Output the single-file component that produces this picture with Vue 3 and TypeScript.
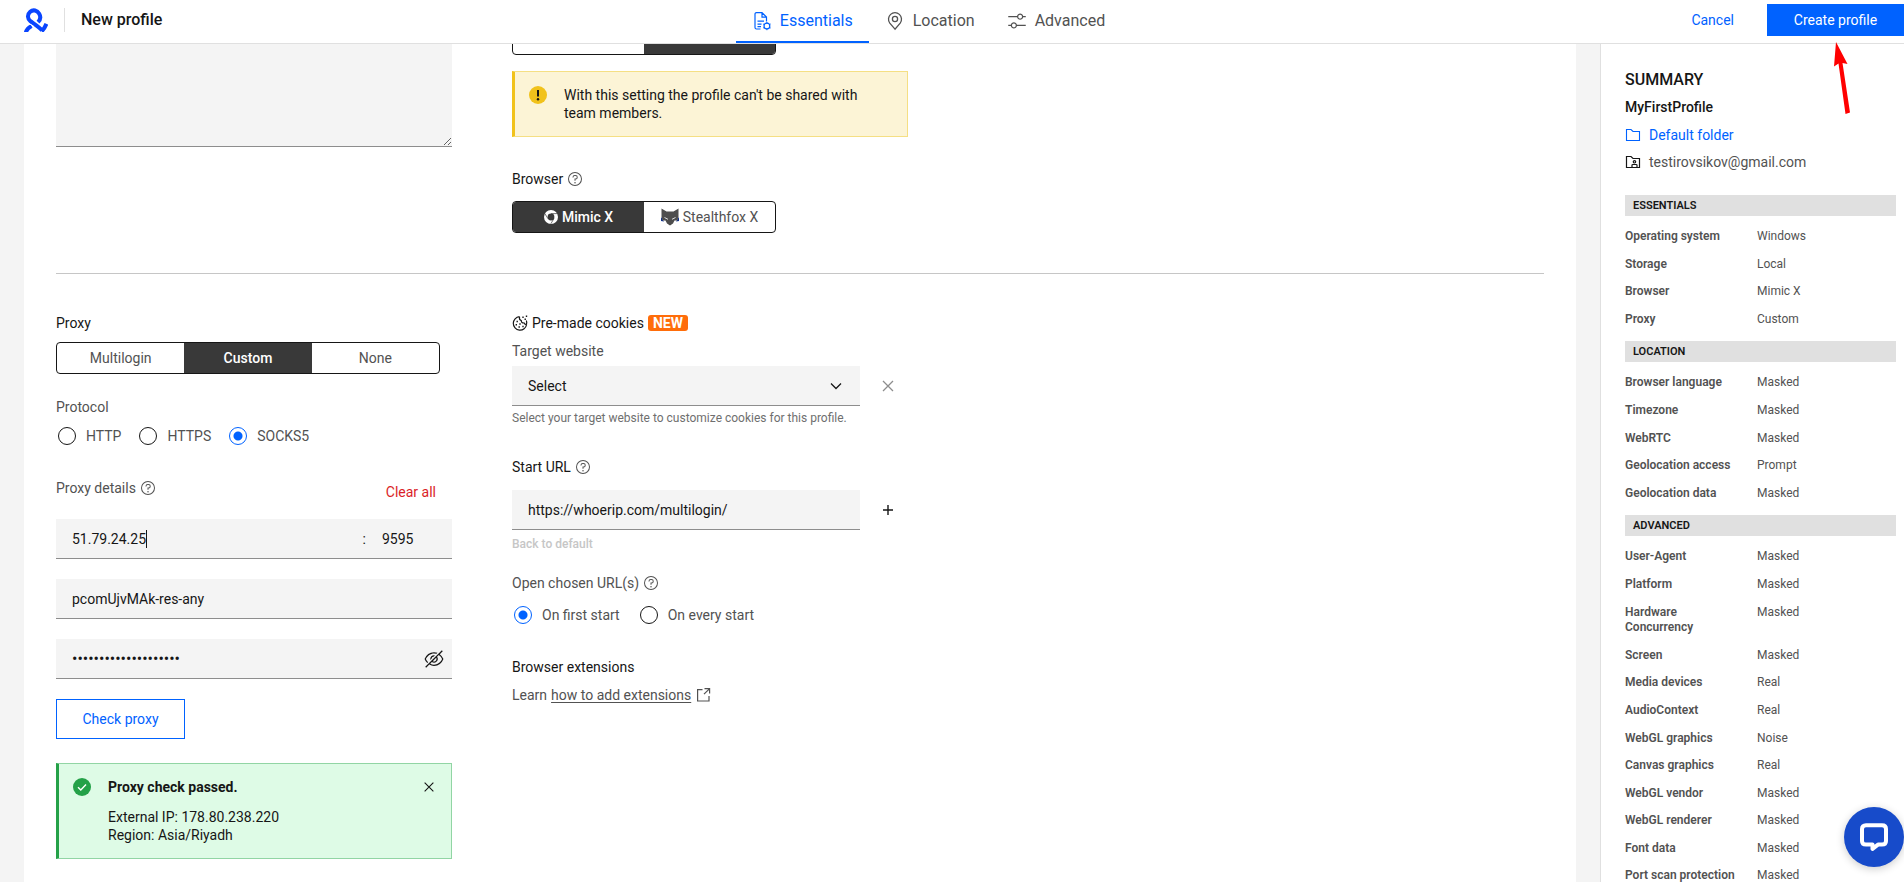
<script setup lang="ts">
import { ref } from 'vue'

interface SummarySection {
  title: string
  rows: [string, string][]
}

const storage = ref('local')
const browser = ref('mimic')
const proxyType = ref('custom')
const protocol = ref('SOCKS5')
const openOn = ref('first')
const host = ref('51.79.24.25')
const port = ref('9595')
const login = ref('pcomUjvMAk-res-any')
const password = ref('k2Vd9sQx71LmPz0TrWe4')
const startUrl = ref('https://whoerip.com/multilogin/')
const site = ref('')
const notes = ref('')

const proxyTypes = [
  { id: 'multilogin', label: 'Multilogin' },
  { id: 'custom', label: 'Custom' },
  { id: 'none', label: 'None' },
]
const protocols = ['HTTP', 'HTTPS', 'SOCKS5']

const sections: SummarySection[] = [
  {
    title: 'ESSENTIALS',
    rows: [
      ['Operating system', 'Windows'],
      ['Storage', 'Local'],
      ['Browser', 'Mimic X'],
      ['Proxy', 'Custom'],
    ],
  },
  {
    title: 'LOCATION',
    rows: [
      ['Browser language', 'Masked'],
      ['Timezone', 'Masked'],
      ['WebRTC', 'Masked'],
      ['Geolocation access', 'Prompt'],
      ['Geolocation data', 'Masked'],
    ],
  },
  {
    title: 'ADVANCED',
    rows: [
      ['User-Agent', 'Masked'],
      ['Platform', 'Masked'],
      ['Hardware Concurrency', 'Masked'],
      ['Screen', 'Masked'],
      ['Media devices', 'Real'],
      ['AudioContext', 'Real'],
      ['WebGL graphics', 'Noise'],
      ['Canvas graphics', 'Real'],
      ['WebGL vendor', 'Masked'],
      ['WebGL renderer', 'Masked'],
      ['Font data', 'Masked'],
      ['Port scan protection', 'Masked'],
    ],
  },
]
</script>

<template>
  <div class="page">
    <svg class="defs" aria-hidden="true">
      <symbol id="help" viewBox="0 0 32 32">
        <path d="M16 2a14 14 0 1 0 14 14A14 14 0 0 0 16 2Zm0 26a12 12 0 1 1 12-12 12 12 0 0 1-12 12Z" />
        <circle cx="16" cy="23.5" r="1.5" />
        <path d="M17 8h-1.5A4.49 4.49 0 0 0 11 12.5v.5h2v-.5a2.5 2.5 0 0 1 2.5-2.5H17a2.5 2.5 0 0 1 0 5h-2v4.5h2V17a4.5 4.5 0 0 0 0-9Z" />
      </symbol>
      <symbol id="cross" viewBox="0 0 16 16">
        <path d="M3 3l10 10M13 3L3 13" fill="none" stroke="currentColor" stroke-width="1.3" />
      </symbol>
    </svg>

    <header class="topbar">
      <div class="brand">
        <svg class="logo" viewBox="0 0 24 24" aria-hidden="true">
          <g fill="none" stroke="#0a45ff" stroke-width="4">
            <path d="M14 14.2C16.6 11.6 16.6 8.2 15.2 5.8C13.2 2.4 9.2 1.2 6.2 3.8C3 6.6 3.4 10.6 6.4 13.2C9.5 15.6 14.5 18.4 18 22.4" />
            <path d="M17.6 23.4C19.2 21.8 20.8 19.8 22.4 15.8" />
            <path d="M1.8 25C2.2 22.2 4.4 19.6 7.6 18" />
          </g>
          <path d="M4.6 15.4L10 18.6" stroke="#fff" stroke-width="1" />
        </svg>
        <h1 class="title">New profile</h1>
      </div>
      <nav class="tabs" role="tablist">
        <button class="tab active" role="tab" aria-selected="true">
          <svg class="tab-icon" viewBox="0 0 20 20" fill="none" stroke="currentColor" stroke-width="1.2">
            <path d="M8.5 18H4.5a1.5 1.5 0 0 1-1.5-1.5V3a1.4 1.4 0 0 1 1.5-1.4H10L14.5 6v4.5M10 1.6V6.2H14.5M5.5 10.2H12M5.5 13.2H9.5M5.5 15.6H9" />
            <circle cx="14.9" cy="15" r="2.9" />
            <path d="M14.9 11v1.4M14.9 17.8v1.4M11.2 13l1.2.6M17.4 16.4l1.2.6M11.2 17l1.2-.6M17.4 13.6l1.2-.6" stroke-width="1" />
          </svg>
          <span>Essentials</span>
        </button>
        <button class="tab" role="tab" aria-selected="false">
          <svg class="tab-icon" viewBox="0 0 20 20" fill="none" stroke="currentColor" stroke-width="1.3">
            <path d="M10 18.2L4.8 12.1A6.5 6.5 0 1 1 15.2 12.1Z" />
            <circle cx="10" cy="8" r="2.6" />
          </svg>
          <span>Location</span>
        </button>
        <button class="tab" role="tab" aria-selected="false">
          <svg class="tab-icon" viewBox="0 0 32 32" fill="currentColor">
            <path d="M30 8h-4.100c-.5-2.300-2.500-4-4.900-4s-4.400 1.700-4.900 4H2v2h14.100c.5 2.300 2.500 4 4.900 4s4.400-1.700 4.900-4H30V8zM21 12c-1.700 0-3-1.300-3-3s1.300-3 3-3s3 1.300 3 3S22.700 12 21 12zM2 24h4.100c.5 2.300 2.500 4 4.900 4s4.400-1.700 4.900-4H30v-2H15.900c-.5-2.300-2.500-4-4.900-4s-4.400 1.700-4.900 4H2V24zM11 20c1.700 0 3 1.300 3 3s-1.300 3-3 3s-3-1.300-3-3S9.300 20 11 20z" />
          </svg>
          <span>Advanced</span>
        </button>
      </nav>
      <div class="actions">
        <button class="cancel">Cancel</button>
        <button class="create">Create profile</button>
      </div>
    </header>

    <div class="body">
      <main class="card">
        <section class="columns upper">
          <div>
            <textarea v-model="notes" class="notes" aria-label="Notes"></textarea>
          </div>
          <div>
            <div class="storage-clip">
              <div class="segmented two">
                <button class="seg" :class="{ on: storage === 'cloud' }" aria-label="Cloud storage" @click="storage = 'cloud'">
                  <svg class="cut-icon" viewBox="0 0 20 18"><path d="M5 12.500h8.500a4 4 0 0 0 .5-7.900A5 5 0 0 0 4.500 5 3.800 3.800 0 0 0 5 12.500Z" fill="none" stroke="currentColor" stroke-width="1.500" /></svg>
                </button>
                <button class="seg" :class="{ on: storage === 'local' }" aria-label="Local storage" @click="storage = 'local'">
                  <svg class="cut-icon" viewBox="0 0 20 18"><path d="M3 2h14v9H3z" fill="none" stroke="currentColor" /><path d="M2 12h16v2H2z" fill="#a8a8a8" /></svg>
                </button>
              </div>
            </div>
            <div class="notice warn" role="status">
              <svg class="notice-icon" viewBox="0 0 18 18">
                <circle cx="9" cy="9" r="9" fill="#f1c21b" />
                <path d="M8 4h2v6.500H8z" fill="#161616" />
                <circle cx="9" cy="13.300" r="1.200" fill="#161616" />
              </svg>
              <p class="notice-body">With this setting the profile can't be shared with team members.</p>
            </div>
            <h2 class="label strong browser-label">Browser <svg class="help"><use href="#help" /></svg></h2>
            <div class="segmented two">
              <button class="seg" :class="{ on: browser === 'mimic' }" @click="browser = 'mimic'">
                <svg class="mimic" viewBox="0 0 14 14">
                  <circle cx="7" cy="7" r="7" fill="#fff" />
                  <circle cx="7" cy="7" r="3.400" fill="#393939" />
                  <path d="M7 3.600H13.500M4 8.700L.8 3.500M9.900 8.700L6.800 13.800" stroke="#393939" stroke-width=".7" />
                </svg>
                <span>Mimic X</span>
              </button>
              <button class="seg" :class="{ on: browser === 'stealthfox' }" @click="browser = 'stealthfox'">
                <svg class="fox" viewBox="0 0 18 18">
                  <path d="M0 9L3 13.500 0 13ZM18 9L15 13.500 18 13Z" fill="#0c2f8f" />
                  <path d="M.5.500L5.500 3.500H12.500L17.500.500V9L16.500 12.500H13.500L12 15.500 9 17.500 6 15.500 4.500 12.500H1.500L.5 9Z" fill="#4d4d4d" />
                  <path d="M3.500 9.500L7 11.300M14.500 9.500L11 11.300" stroke="#e0e0e0" />
                </svg>
                <span>Stealthfox X</span>
              </button>
            </div>
          </div>
        </section>

        <hr class="divider" />

        <section class="columns lower">
          <div>
            <h2 class="label strong">Proxy</h2>
            <div class="segmented three">
              <button v-for="t in proxyTypes" :key="t.id" class="seg" :class="{ on: proxyType === t.id }" @click="proxyType = t.id">
                {{ t.label }}
              </button>
            </div>

            <fieldset class="radios protocol">
              <legend class="label">Protocol</legend>
              <label v-for="p in protocols" :key="p" class="radio">
                <input v-model="protocol" type="radio" name="protocol" :value="p" />
                <span>{{ p }}</span>
              </label>
            </fieldset>

            <div class="details-head">
              <h2 class="label">Proxy details <svg class="help"><use href="#help" /></svg></h2>
              <button class="clear">Clear all</button>
            </div>
            <div class="proxy-fields">
              <div class="field host">
                <input v-model="host" class="host-input" aria-label="Host" />
                <span class="caret"></span>
                <span class="colon">:</span>
                <input v-model="port" class="port-input" aria-label="Port" />
              </div>
              <div class="field"><input v-model="login" aria-label="Login" /></div>
              <div class="field">
                <input v-model="password" class="password" type="password" aria-label="Password" />
                <button class="eye" aria-label="Show password">
                  <svg viewBox="0 0 32 32" fill="currentColor">
                    <path d="M5.240 22.510l1.430-1.420A14.060 14.060 0 0 1 3.070 16C5.100 10.930 10.700 7 16 7a12.380 12.380 0 0 1 4 .720l1.550-1.560A14.720 14.720 0 0 0 16 5 16.690 16.690 0 0 0 1.060 15.660a1 1 0 0 0 0 .680A16 16 0 0 0 5.240 22.510Z" />
                    <path d="M12 15.730a4 4 0 0 1 3.700-3.700l1.810-1.820a6 6 0 0 0-7.330 7.330Z" />
                    <path d="M30.940 15.660A16.400 16.400 0 0 0 25.200 8.220L30 3.410 28.590 2 2 28.590 3.410 30l5.100-5.100A15.290 15.290 0 0 0 16 27 16.690 16.690 0 0 0 30.940 16.340 1 1 0 0 0 30.940 15.660ZM20 16a4 4 0 0 1-6 3.440L19.440 14A4 4 0 0 1 20 16Zm-4 9a13.050 13.050 0 0 1-6-1.580l2.540-2.540a6 6 0 0 0 8.350-8.350l2.870-2.870A14.540 14.540 0 0 1 28.930 16C26.900 21.070 21.300 25 16 25Z" />
                  </svg>
                </button>
              </div>
              <button class="check">Check proxy</button>
            </div>

            <div class="notice success" role="status">
              <svg class="notice-icon" viewBox="0 0 18 18">
                <circle cx="9" cy="9" r="9" fill="#24a148" />
                <path d="M5 9.200L7.800 12 13 6.600" fill="none" stroke="#fff" stroke-width="1.400" />
              </svg>
              <div class="notice-body">
                <strong>Proxy check passed.</strong>
                <p>External IP: 178.80.238.220<br />Region: Asia/Riyadh</p>
              </div>
              <button class="icon-button" aria-label="Dismiss"><svg class="x-small"><use href="#cross" /></svg></button>
            </div>
          </div>

          <div>
            <h2 class="label strong">
              <svg class="cookie" viewBox="0 0 16 16" fill="none" stroke="currentColor" stroke-width="1.200">
                <path d="M7.500 1.700A6.700 6.700 0 1 0 14.600 9.500M14.500 9C14.900 7.800 14.800 6.500 14.300 5.500M7.500 1.700C7.200 3.500 7.800 5.300 9.300 5.700 9.200 7.300 10.500 8.300 12 7.900 12.500 9.200 13.500 9.700 14.600 9.300" />
                <path d="M4.500 6.500h1.400M3.600 9.800h1.400M6.500 12h1.400M7.300 8.900h1.400M10.300 11.600h1.400M10.300 2.300h1.400M13.800 1.200h1.400M12.500 4.300h1.400" stroke-width="1.500" />
              </svg>
              Pre-made cookies <span class="badge">NEW</span>
            </h2>
            <label class="label target-label" for="site">Target website</label>
            <div class="with-action">
              <div class="field select">
                <select id="site" v-model="site"><option value="">Select</option></select>
                <svg class="chevron" viewBox="0 0 16 16"><path d="M3 5.500L8 10.500 13 5.500" fill="none" stroke="currentColor" stroke-width="1.300" /></svg>
              </div>
              <button class="icon-button muted" aria-label="Clear target website"><svg><use href="#cross" /></svg></button>
            </div>
            <p class="helper">Select your target website to customize cookies for this profile.</p>

            <label class="label strong url-label" for="url">Start URL <svg class="help"><use href="#help" /></svg></label>
            <div class="with-action">
              <div class="field"><input id="url" v-model="startUrl" /></div>
              <button class="icon-button" aria-label="Add URL">
                <svg viewBox="0 0 16 16"><path d="M8 3v10M3 8h10" stroke="currentColor" stroke-width="1.400" /></svg>
              </button>
            </div>
            <button class="back" disabled>Back to default</button>

            <fieldset class="radios open-on">
              <legend class="label">Open chosen URL(s) <svg class="help"><use href="#help" /></svg></legend>
              <label class="radio"><input v-model="openOn" type="radio" name="open" value="first" /><span>On first start</span></label>
              <label class="radio"><input v-model="openOn" type="radio" name="open" value="every" /><span>On every start</span></label>
            </fieldset>

            <h2 class="label strong ext-label">Browser extensions</h2>
            <p class="label learn">
              Learn <a href="#extensions">how to add extensions</a>
              <svg class="launch" viewBox="0 0 16 16" fill="none" stroke="currentColor" stroke-width="1.200">
                <path d="M7.500 2.600H2.600V14H14V9M9.500 1.600H14.600V6.500M14.400 1.800L9 7.200" />
              </svg>
            </p>
          </div>
        </section>
      </main>

      <aside class="summary">
        <h2 class="summary-title">SUMMARY</h2>
        <p class="profile-name">MyFirstProfile</p>
        <a class="meta folder" href="#folder">
          <svg viewBox="0 0 16 14" fill="none" stroke="currentColor" stroke-width="1.100"><path d="M1.500 1.500H6L8 3.500H14.500V12.500H1.500Z" /></svg>
          <span>Default folder</span>
        </a>
        <p class="meta">
          <svg class="dark" viewBox="0 0 16 14" fill="none" stroke="currentColor" stroke-width="1.200">
            <path d="M1.500 1.500H6L8 3.500H14.500V12.500H1.500Z" />
            <circle cx="9.500" cy="6.800" r="1.200" />
            <path d="M7 12V10.200Q7 9.500 7.800 9.500H11.200Q12 9.500 12 10.200V12" />
          </svg>
          <span>testirovsikov@gmail.com</span>
        </p>
        <section v-for="s in sections" :key="s.title" class="group">
          <h3>{{ s.title }}</h3>
          <dl>
            <div v-for="[name, value] in s.rows" :key="name" class="row">
              <dt>{{ name }}</dt>
              <dd>{{ value }}</dd>
            </div>
          </dl>
        </section>
      </aside>
    </div>

    <svg class="pointer" viewBox="0 0 18 73" aria-hidden="true">
      <path d="M3 0L14.500 22 9.500 21 17 70.500 12.500 72 5.500 21.500 1 24.500Z" fill="#f00" />
    </svg>

    <button class="chat" aria-label="Open chat">
      <svg viewBox="0 0 28 28">
        <path d="M6 2.200H22Q26 2.200 26 6V18Q26 21.600 22 21.600H18L12.500 25.800V21.600H6Q2 21.600 2 18V6Q2 2.200 6 2.200Z" fill="none" stroke="#fff" stroke-width="4" stroke-linejoin="round" />
      </svg>
    </button>
  </div>
</template>

<style>
html,
body {
  margin: 0;
  overflow: hidden;
}
</style>

<style scoped>
.page {
  height: 100vh;
  display: flex;
  flex-direction: column;
  overflow: hidden;
  background: #f4f4f4;
  color: #161616;
  font-family: Roboto, "Liberation Sans", sans-serif;
  font-size: 14px;
  line-height: 18px;
}
.defs {
  display: none;
}
h1, h2, h3, p, dl, dd {
  margin: 0;
  font-size: inherit;
  font-weight: 400;
}
button, input, select, textarea {
  font: inherit;
  color: inherit;
  margin: 0;
  padding: 0;
  border: 0;
  border-radius: 0;
  background: none;
  outline: 0;
}
button {
  cursor: pointer;
}
svg {
  flex: none;
}

.topbar {
  flex: none;
  display: grid;
  grid-template-columns: minmax(0, 736fr) auto minmax(0, 783fr);
  height: 43px;
  border-bottom: 1px solid #e0e0e0;
  background: #fff;
}
.brand {
  display: flex;
  align-items: center;
  height: 40px;
  padding-left: 24px;
}
.logo {
  width: 24px;
  height: 24px;
}
.title {
  margin-left: 16px;
  padding-left: 16px;
  border-left: 1px solid #e0e0e0;
  font-size: 16px;
  font-weight: 500;
  line-height: 24px;
}
.tabs {
  display: flex;
}
.tab {
  display: flex;
  align-items: center;
  gap: 8px;
  padding: 0 16px 2px;
  color: #525252;
  font-size: 16px;
}
.tab.active {
  padding-bottom: 0;
  border-bottom: 2px solid #0062ff;
  color: #0062ff;
}
.tab-icon {
  width: 20px;
  height: 20px;
}
.actions {
  display: flex;
  justify-content: flex-end;
  align-items: center;
  height: 40px;
  gap: 33px;
}
.cancel {
  color: #0062ff;
}
.create {
  min-width: 137px;
  height: 32px;
  padding: 0 24px;
  background: #0062ff;
  color: #fff;
}

.body {
  flex: 1;
  min-height: 0;
  display: flex;
}
.card {
  flex: 1;
  min-width: 0;
  margin: 0 24px;
  padding: 0 32px;
  background: #fff;
}
.columns {
  display: grid;
  grid-template-columns: repeat(2, minmax(0, 396px));
  column-gap: 60px;
}
.upper {
  padding-bottom: 40px;
}
.notes {
  display: block;
  box-sizing: border-box;
  width: 100%;
  height: 103px;
  background: #f4f4f4;
  border-bottom: 1px solid #8d8d8d;
  resize: vertical;
}
.storage-clip {
  height: 11px;
  margin-bottom: 16px;
  overflow: hidden;
  display: flex;
  align-items: flex-end;
}
.segmented {
  flex: none;
  display: flex;
  box-sizing: border-box;
  height: 32px;
  border: 1px solid #161616;
  border-radius: 4px;
  overflow: hidden;
}
.two {
  width: 264px;
}
.three {
  width: 384px;
}
.seg {
  flex: 1;
  display: flex;
  align-items: center;
  justify-content: center;
  gap: 4px;
  color: #525252;
}
.seg.on {
  background: #393939;
  color: #fff;
  font-weight: 500;
}
.cut-icon {
  width: 20px;
  height: 18px;
  margin-right: 40px;
}
.mimic {
  width: 14px;
  height: 14px;
}
.fox {
  width: 18px;
  height: 18px;
}

.notice {
  display: flex;
  align-items: flex-start;
  gap: 17px;
  padding: 14px;
  border: 1px solid;
  border-left-width: 3px;
}
.warn {
  padding-right: 24px;
  border-color: #f5df84;
  border-left-color: #f1c21b;
  background: #fcf4d6;
}
.success {
  margin-top: 24px;
  border-color: #91d5a4;
  border-left-color: #24a148;
  background: #defbe6;
}
.notice-icon {
  width: 18px;
  height: 18px;
}
.notice-body {
  flex: 1;
}
.notice-body strong {
  display: block;
  margin-bottom: 12px;
  font-weight: 700;
}

.label {
  display: flex;
  align-items: center;
  gap: 4px;
  padding: 0;
  color: #525252;
}
.strong {
  color: #161616;
}
.help {
  width: 16px;
  height: 16px;
  fill: #525252;
}
.browser-label {
  margin: 33px 0 13px;
}
.divider {
  margin: 0;
  border: 0;
  border-top: 1px solid #c6c6c6;
}
.lower {
  padding-top: 40px;
}
.lower .three {
  margin-top: 10px;
}
.radios {
  display: flex;
  gap: 18px;
  min-width: 0;
  margin: 0;
  padding: 0 2px;
  border: 0;
}
.radios legend {
  margin-left: -2px;
}
.radio {
  display: flex;
  align-items: center;
  gap: 10px;
  color: #525252;
}
.radio input {
  appearance: none;
  width: 18px;
  height: 18px;
  border: 1px solid #161616;
  border-radius: 50%;
}
.radio input:checked {
  border-color: #0062ff;
  background: radial-gradient(circle, #0062ff 4px, transparent 5px);
}
.protocol {
  margin-top: 24px;
}
.protocol legend {
  margin-bottom: 11px;
}
.details-head {
  display: flex;
  justify-content: space-between;
  align-items: flex-end;
  height: 26px;
  margin-top: 30px;
  padding-right: 16px;
}
.details-head h2 {
  align-self: center;
}
.clear {
  color: #da1e28;
}
.proxy-fields {
  display: flex;
  flex-direction: column;
  align-items: stretch;
  gap: 20px;
  margin-top: 18px;
}
.field {
  flex: 1;
  display: flex;
  align-items: center;
  box-sizing: border-box;
  height: 40px;
  min-width: 0;
  padding: 0 8px 0 16px;
  border-bottom: 1px solid #8d8d8d;
  background: #f4f4f4;
}
.proxy-fields .field {
  flex: none;
}
.field input,
.field select {
  flex: 1;
  min-width: 0;
}
.field .host-input {
  flex: none;
  field-sizing: content;
}
.field .password {
  font-size: 16px;
}
.caret {
  width: 1px;
  height: 18px;
  background: #161616;
}
.colon {
  margin-left: auto;
}
.field .port-input {
  flex: none;
  width: 62px;
  margin-left: 16px;
}
.eye {
  width: 20px;
  height: 20px;
}
.eye svg {
  display: block;
}
.check {
  align-self: flex-start;
  min-width: 129px;
  height: 40px;
  padding: 0 24px;
  border: 1px solid #0062ff;
  color: #0062ff;
}

.cookie {
  width: 16px;
  height: 16px;
}
.badge {
  padding: 0 5px;
  border-radius: 3px;
  background: #ff6d0a;
  color: #fff;
  font-weight: 700;
  line-height: 16px;
}
.target-label {
  margin: 10px 0 6px;
}
.with-action {
  display: flex;
  align-items: center;
  gap: 20px;
  padding-right: 12px;
}
.icon-button {
  width: 16px;
  height: 18px;
  display: flex;
  align-items: center;
  justify-content: center;
}
.icon-button svg {
  width: 16px;
  height: 16px;
}
.icon-button .x-small {
  width: 14px;
  height: 14px;
}
.muted {
  color: #8d8d8d;
}
.field select {
  appearance: none;
}
.chevron {
  width: 16px;
  height: 16px;
  margin-right: 8px;
  pointer-events: none;
}
.helper {
  margin-top: 4px;
  color: #6f6f6f;
  font-size: 12px;
  line-height: 16px;
}
.url-label {
  margin: 32px 0 14px;
}
.back {
  display: block;
  margin-top: 6px;
  color: #c6c6c6;
  font-size: 12px;
  font-weight: 500;
  line-height: 16px;
}
.open-on {
  gap: 20px;
  margin-top: 22px;
}
.open-on legend {
  margin-bottom: 14px;
}
.ext-label {
  margin: 34px 0 10px;
}
.learn a {
  color: inherit;
  text-underline-offset: 2px;
}
.launch {
  width: 16px;
  height: 16px;
}

.summary {
  flex: none;
  box-sizing: border-box;
  width: 304px;
  padding: 24px 8px 0 24px;
  border-left: 1px solid #e0e0e0;
  background: #fff;
}
.summary-title {
  font-size: 16px;
  font-weight: 500;
  line-height: 24px;
}
.profile-name {
  margin: 6px 0 10px;
  font-weight: 500;
}
.meta {
  display: flex;
  align-items: center;
  gap: 8px;
  margin-bottom: 9px;
  color: #525252;
  text-decoration: none;
}
.meta svg {
  width: 16px;
  height: 14px;
}
.meta.folder {
  color: #0062ff;
}
.meta .dark {
  color: #161616;
}
.group {
  margin-bottom: 14px;
  font-size: 12px;
  line-height: 1.3;
}
.meta + .group {
  margin-top: 24px;
}
.group h3 {
  margin-bottom: 13px;
  padding: 3px 8px;
  background: #e0e0e0;
  color: #161616;
  font-size: 11px;
  font-weight: 600;
  line-height: 15px;
}
.row {
  display: grid;
  grid-template-columns: 120px 1fr;
  column-gap: 12px;
  color: #525252;
}
.row + .row {
  margin-top: 12px;
}
.row dt {
  font-weight: 600;
}

.pointer {
  position: absolute;
  top: 42px;
  right: 53px;
  width: 18px;
  height: 73px;
}
.chat {
  position: fixed;
  right: 0;
  bottom: 15px;
  display: flex;
  align-items: center;
  justify-content: center;
  width: 60px;
  height: 60px;
  border-radius: 50%;
  background: #174bca;
  box-shadow: 0 2px 8px rgba(0, 0, 0, 0.2);
}
.chat svg {
  width: 28px;
  height: 28px;
}
</style>
